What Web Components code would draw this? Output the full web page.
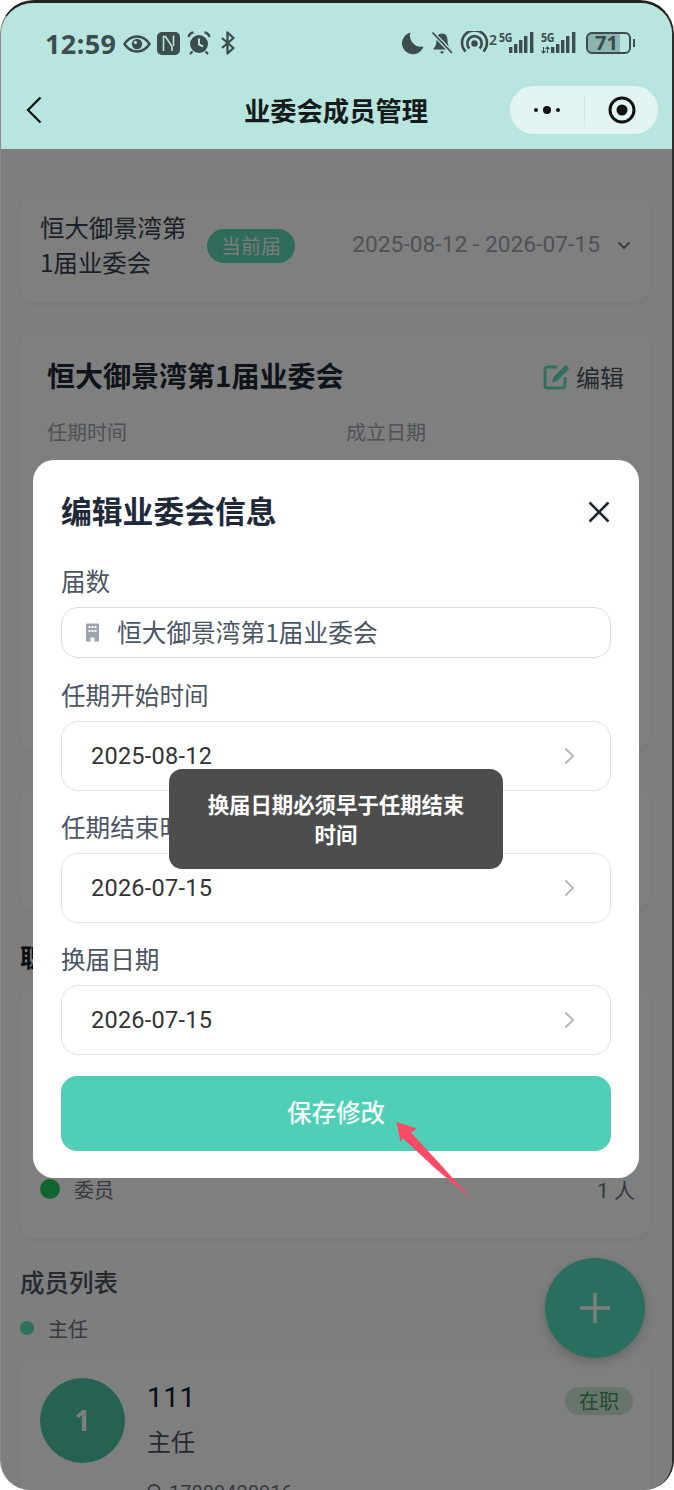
<!DOCTYPE html>
<html lang="zh-CN">
<head>
<meta charset="utf-8">
<title>业委会成员管理</title>
<style>
html,body{margin:0;padding:0;background:#fff}
body{font-family:"Noto Sans CJK SC","Noto Sans",sans-serif}
</style>
</head>
<body>
<phone-screen>
  <status-bar slot="top"></status-bar>
  <nav-bar slot="top" title="业委会成员管理"></nav-bar>
  <committee-page></committee-page>
  <edit-modal slot="over"></edit-modal>
  <toast-message slot="over">换届日期必须早于任期结束时间</toast-message>
  <pointer-arrow slot="over"></pointer-arrow>
</phone-screen>
<script>
const FONT='"Noto Sans CJK SC","Noto Sans",sans-serif';
function def(name,html,init){
  customElements.define(name,class extends HTMLElement{
    constructor(){super();this.attachShadow({mode:'open'});}
    connectedCallback(){
      this.shadowRoot.innerHTML=typeof html==='function'?html(this):html;
      if(init)init(this);
    }
  });
}
def('phone-screen',`<style>
:host{display:block;width:674px;height:1490px;background:#fff;font-family:${FONT}}
.frame{box-sizing:border-box;position:relative;width:674px;height:1490px;overflow:hidden;border-radius:34px 34px 30px 30px;border-top:3px solid #222;border-right:2px solid #2c2c2c;border-left:1px solid #8a8a8a;background:#fafcfb}
.top{position:relative;z-index:3;height:146px;background:#b8e6df}
.dim{position:absolute;inset:0;z-index:2;background:rgba(0,0,0,.5)}
.over{position:absolute;inset:-3px -2px 0 -1px;z-index:4;pointer-events:none}
</style>
<div class="frame">
<div class="top"><slot name="top"></slot></div>
<slot></slot>
<div class="dim"></div>
<div class="over"><slot name="over"></slot></div>
</div>`);

def('status-bar',`<style>
:host{display:flex;align-items:center;height:80px;box-sizing:border-box;padding:0 0 0 44px;margin-bottom:3px;color:#3d4c4c;position:relative}
.time{font:700 27px/1 "Noto Sans",sans-serif;letter-spacing:.4px;width:78px}
svg{display:block;flex:none}
.gap{flex:1}
.t{font-family:"Noto Sans",sans-serif}
</style>
<span class="time">12:59</span>
<svg width="28" height="20" viewBox="0 0 28 20" style="margin-top:1px"><path d="M1.5 10C5 4.5 9 2.500 14 2.500S23 4.500 26.500 10C23 15.500 19 17.500 14 17.500S5 15.500 1.500 10Z" fill="none" stroke="#3d4c4c" stroke-width="2.400"/><circle cx="14" cy="10" r="5.200" fill="#3d4c4c"/><circle cx="12.400" cy="8.400" r="1.600" fill="#b8e6df"/></svg>
<svg width="23" height="23" viewBox="0 0 23 23" style="margin-left:6px"><rect x="0" y="0" width="23" height="23" rx="5" fill="#3d4c4c"/><path d="M6.500 19V4.500H8.500L15 14.500V19" fill="none" stroke="#b8e6df" stroke-width="1.600"/><path d="M16.500 3.500V14" fill="none" stroke="#b8e6df" stroke-width="1.600"/></svg>
<svg width="24" height="24" viewBox="0 0 24 24" style="margin-left:7px"><circle cx="12" cy="13" r="9" fill="#3d4c4c"/><path d="M12 7.500V13.500L16 15.500" fill="none" stroke="#b8e6df" stroke-width="2"/><path d="M1.500 6Q2.500 2 6.500 1.500M22.500 6Q21.500 2 17.500 1.500" fill="none" stroke="#3d4c4c" stroke-width="2.400"/><path d="M5.500 20.500L3 23M18.500 20.500L21 23" stroke="#3d4c4c" stroke-width="2.200"/></svg>
<svg width="16" height="24" viewBox="0 0 16 24" style="margin-left:9px"><path d="M2 7L13.500 17L7.500 22.500V1.500L13.500 7L2 17" fill="none" stroke="#3d4c4c" stroke-width="2.300" stroke-linejoin="round"/></svg>
<span class="gap"></span>
<svg width="23" height="24" viewBox="0 0 23 24"><path d="M9.500 1.500A11 11 0 1 0 22.500 15.500A11 11 0 0 1 9.500 1.500Z" fill="#3d4c4c"/></svg>
<svg width="22" height="24" viewBox="0 0 22 24" style="margin-left:7px"><path d="M11 2.500C15.500 2.500 16.500 6 16.500 9.500C16.500 13 17.500 15.500 19.500 17.500V18.500H2.500V17.500C4.500 15.500 5.500 13 5.500 9.500C5.500 6 6.500 2.500 11 2.500Z" fill="#3d4c4c"/><path d="M8.500 20.500H13.500L11 23Z" fill="#3d4c4c"/><path d="M1.500 1.500L21 22" stroke="#b8e6df" stroke-width="4.200"/><path d="M1.500 1.500L21 22" stroke="#3d4c4c" stroke-width="1.800"/></svg>
<svg width="29" height="24" viewBox="0 0 29 24" style="margin-left:7px"><path d="M5.500 20.500A12.500 12.500 0 1 1 23.500 20.500" fill="none" stroke="#3d4c4c" stroke-width="2.600"/><path d="M9.500 17.500A7.200 7.200 0 1 1 19.500 17.500" fill="none" stroke="#3d4c4c" stroke-width="2.600"/><circle cx="14.500" cy="12.500" r="3.200" fill="#3d4c4c"/></svg>
<span class="t" style="font-size:14px;font-weight:600;width:9px;align-self:flex-start;margin-top:27px">2</span>
<signal-5g style="margin-left:1px"></signal-5g>
<signal-5g arrows style="margin-left:6px"></signal-5g>
<span style="display:flex;align-items:center;margin:0 37px 0 9px">
<span class="t" style="box-sizing:border-box;width:45px;height:22px;border:2px solid #3d4c4c;border-radius:6px;background:linear-gradient(90deg,#8db4b0 77%,transparent 77%);font-size:20px;font-weight:700;line-height:17px;text-align:center;padding-right:4px">71</span>
<span style="width:2px;height:8px;background:#3d4c4c;margin-left:2px"></span>
</span>`);

def('signal-5g',h=>`<style>
:host{display:block;position:relative;width:36px;height:24px;color:#3d4c4c}
span{position:absolute;left:0;top:1px;font:700 12.5px/12px "Noto Sans",sans-serif;letter-spacing:-.5px;transform:scaleX(.85);transform-origin:left}
svg{position:absolute;left:0;top:0}
</style><span>5G</span>
<svg width="36" height="24" viewBox="0 0 36 24" fill="#3d4c4c">
${h.hasAttribute('arrows')?'<path d="M2.500 16V22M.5 20L2.500 22L4.500 20M6.500 22V16M4.500 18L6.500 16L8.500 18" stroke="#3d4c4c" stroke-width="1.100" fill="none"/>':''}
<rect x="10" y="16" width="3.400" height="6"/>
<rect x="15" y="13" width="3.400" height="9"/>
<rect x="20" y="9" width="3.400" height="13"/>
<rect x="25" y="5" width="3.400" height="17"/>
<rect x="31" y="1" width="3.400" height="21"/>
</svg>`);

def('nav-bar',h=>`<style>
:host{display:grid;grid-template-columns:1fr auto 1fr;align-items:center;box-sizing:border-box;height:60px;padding:0 14px 12px 13px;color:#111}
svg{display:block}
.back{margin-left:12px}
h1{margin:0;font-size:26.3px;font-weight:700;line-height:48px;color:#151b1b}
.cap{justify-self:end;display:flex;align-items:center;width:148px;height:48px;border-radius:24px;background:#e3f5f2}
.cap>div{display:flex;align-items:center;justify-content:center}
.m{width:74px;height:100%;gap:5px}
.m i{display:block;width:4px;height:4px;border-radius:50%;background:#111}
.m i.b{width:8px;height:8px}
.d{width:1px;height:32px;background:#d4e9e6}
.r{flex:1}
</style>
<svg class="back" width="16" height="28" viewBox="0 0 16 28"><path d="M14.500 1.500L2 14L14.500 26.500" fill="none" stroke="#111" stroke-width="2.300"/></svg>
<h1>${h.getAttribute('title')}</h1>
<div class="cap"><div class="m"><i></i><i class="b"></i><i></i></div><div class="d"></div>
<div class="r"><svg width="28" height="28" viewBox="0 0 28 28"><circle cx="14" cy="14" r="12" fill="none" stroke="#111" stroke-width="3"/><circle cx="14" cy="14" r="5.500" fill="#111"/></svg></div></div>`);

def('page-card',`<style>
:host{display:block;box-sizing:border-box;background:#fff;border-radius:16px;box-shadow:0 2px 4px rgba(0,0,0,.05);border:1px solid #fafafa}
</style><slot></slot>`);

def('committee-page',`<style>
:host{display:block;padding:44px 22px 0 18px;color:#374151}
page-card{width:632px}
.c1{height:109px;display:flex;align-items:center;padding:0 19px 4px 20px;margin-bottom:26px}
.name{font-size:24.4px;line-height:35px;width:150px;margin-right:17px;padding-bottom:4px;color:#374151}
.tag{width:88px;height:34px;border-radius:17px;background:#5cd6b4;color:#f6f6f6;font-size:20px;line-height:34px;text-align:center}
.date{margin-left:auto;font:400 22.8px/1 Roboto,sans-serif;color:#9ca3af;white-space:nowrap}
.c1 svg{margin-left:17px;flex:none}
.c2{height:422px;padding:27px 26px 0 27px}
.row{display:flex;justify-content:space-between;align-items:center;height:40px}
.ttl{font-size:28px;font-weight:700;color:#1f2937;margin-top:-2px}
.edit{display:flex;align-items:center;gap:6px;font-size:24px;color:#4b5563}
.lbls{display:grid;grid-template-columns:299px 1fr;margin-top:21px;font-size:20px;line-height:30px;color:#9ca3af}
.c3{height:125px;margin-top:35px}
h2{margin:0 0 0 1px;font-size:24.5px;line-height:36px;font-weight:500;color:#4b5563}
.s1{margin-top:29px;margin-bottom:10px;color:#111827;font-weight:700}
.c4{height:253px;padding-top:187px}
.st{display:flex;align-items:center;padding:0 15px 0 20px;height:32px;font-size:20px;color:#6b7280}
.dot{width:20px;height:20px;border-radius:50%;background:#22cc5e;margin-right:14px}
.n{margin-left:auto;font:400 21px Roboto,sans-serif}
.s2{margin-top:26px}
.le{display:flex;align-items:center;height:30px;margin:13px 0 0 1px;font-size:20px;color:#6b7280}
.le i{width:14px;height:14px;border-radius:50%;background:#56e0c0;margin:0 14px 0 0}
.c5{margin-top:14px;height:200px;padding:20px 17px 0 20px;display:flex;align-items:flex-start;position:relative}
.av{flex:none;width:85px;height:85px;border-radius:50%;background:#4cc4a6;color:#fff;font:700 28px/85px "Noto Sans",sans-serif;text-align:center}
.in{margin-left:22px;flex:1;padding-top:2px}
.nm{font:400 28px/36px Roboto,sans-serif;color:#111827;letter-spacing:.500px}
.ro{font-size:24px;line-height:36px;margin-top:7px;color:#4b5563}
.ph{display:flex;align-items:center;gap:8px;margin-top:20px;font:400 20px/28px Roboto,sans-serif;color:#6b7280}
.st2{width:68px;height:28px;border-radius:14px;background:#d0ead8;color:#3f9a5e;font-size:20px;line-height:28px;text-align:center;margin-top:9px}
.fab{position:absolute;left:544px;top:1255px;width:100px;height:100px;border-radius:50%;background:#52dcbc;box-shadow:0 4px 12px rgba(0,0,0,.2);display:flex;align-items:center;justify-content:center}
</style>
<page-card class="c1"><div class="name">恒大御景湾第1届业委会</div><div class="tag">当前届</div>
<span class="date">2025-08-12 - 2026-07-15</span>
<svg width="14" height="9" viewBox="0 0 14 9"><path d="M1.500 1.500L7 7L12.500 1.500" fill="none" stroke="#6b7280" stroke-width="1.800"/></svg></page-card>
<page-card class="c2">
<div class="row"><span class="ttl">恒大御景湾第1届业委会</span>
<span class="edit"><svg width="27" height="27" viewBox="0 0 27 27"><path d="M14 4H5Q2 4 2 7V22Q2 25 5 25H19Q22 25 22 22V14" fill="none" stroke="#62e0c0" stroke-width="3"/><path d="M10 14.500L21 3.500Q23 1.500 25 3.500Q26.500 5.500 24.500 7.500L13.500 18.500L9 19.500Z" fill="#62e0c0"/></svg>编辑</span></div>
<div class="lbls"><span>任期时间</span><span>成立日期</span></div>
</page-card>
<page-card class="c3"></page-card>
<h2 class="s1">职</h2>
<page-card class="c4"><div class="st"><span class="dot"></span>委员<span class="n">1 人</span></div></page-card>
<h2 class="s2">成员列表</h2>
<div class="le"><i></i>主任</div>
<page-card class="c5"><div class="av">1</div>
<div class="in"><div class="nm">111</div><div class="ro">主任</div>
<div class="ph"><svg width="14" height="18" viewBox="0 0 14 18"><path d="M7 1C3.500 1 1.500 3.500 1.500 6.500C1.500 10 7 16 7 16S12.500 10 12.500 6.500C12.500 3.500 10.500 1 7 1Z" fill="none" stroke="#6b7280" stroke-width="1.800"/></svg>17889428916</div></div>
<div class="st2">在职</div></page-card>
<div class="fab"><svg width="32" height="32" viewBox="0 0 32 32"><path d="M16 1V31M1 16H31" stroke="#fff" stroke-width="3.500"/></svg></div>`);

def('form-field',h=>`<style>
:host{display:block;margin-top:20px}
label{display:block;font-size:24.6px;line-height:30px;padding-bottom:4px;color:#4b5563;margin-bottom:8px}
.box{box-sizing:border-box;height:70px;border:1.500px solid #dfe1e5;border-radius:17px;background:#fff;display:flex;align-items:center;padding:0 35px 1px 29px;font:400 23.500px Roboto,sans-serif;color:#333;letter-spacing:.250px}
svg{margin-left:auto;display:block}
</style><label>${h.getAttribute('label')}</label>
<div class="box">${h.getAttribute('value')}<svg width="11" height="18" viewBox="0 0 11 18"><path d="M1.500 1.500L9 9L1.500 16.500" fill="none" stroke="#b4b8bf" stroke-width="2"/></svg></div>`);

def('edit-modal',`<style>
:host{position:absolute;left:33px;top:460px;width:606px;height:718px;box-sizing:border-box;background:#fff;border-radius:21px;padding:31px 28px 28px}
.h{display:flex;justify-content:space-between;align-items:center;height:40px}
h3{margin:-4px 0 0;font-size:30.800px;font-weight:700;color:#1f2937}
.lab{font-size:24.600px;line-height:30px;padding-bottom:4px;color:#4b5563;margin:34px 0 8px}
.inp{box-sizing:border-box;height:51px;border:1.500px solid #d9dce1;border-radius:17px;display:flex;align-items:center;padding:0 0 3px 23px;font-size:24.700px;color:#4b5563;gap:17px}
.inp svg{flex:none}
.btn{box-sizing:border-box;height:75px;margin-top:21px;border-radius:16px;background:#4fcfb6;color:#f4fbf9;font-size:24.500px;font-weight:500;text-align:center;line-height:71px}
.x{margin:2px 1px 0 0;display:block}
</style>
<div class="h"><h3>编辑业委会信息</h3>
<svg class="x" width="22" height="22" viewBox="0 0 22 22"><path d="M1.500 1.500L20.500 20.500M20.500 1.500L1.500 20.500" stroke="#1f2937" stroke-width="2.600"/></svg></div>
<div class="lab">届数</div>
<div class="inp"><svg width="15" height="19" viewBox="0 0 15 19" style="margin-top:3px"><path d="M1 1.500Q1 .5 2 .5H13Q14 .5 14 1.500V18.500H9.500V14.500H5.500V18.500H1Z" fill="#9ca3af"/><g fill="#fff"><rect x="3.500" y="3" width="2" height="2"/><rect x="6.500" y="3" width="2" height="2"/><rect x="9.500" y="3" width="2" height="2"/><rect x="3.500" y="7" width="2" height="2"/><rect x="6.500" y="7" width="2" height="2"/><rect x="9.500" y="7" width="2" height="2"/></g></svg>恒大御景湾第1届业委会</div>
<form-field label="任期开始时间" value="2025-08-12" style="margin-top:21px"></form-field>
<form-field label="任期结束时间" value="2026-07-15"></form-field>
<form-field label="换届日期" value="2026-07-15"></form-field>
<div class="btn">保存修改</div>`);

def('toast-message',`<style>
:host{position:absolute;left:169px;top:769px;width:334px;height:100px;box-sizing:border-box;padding:20px 30px;background:#4d4d4d;border-radius:13px;color:#fff;font-size:21.400px;line-height:30px;font-weight:700;text-align:center;z-index:2}
</style><slot></slot>`);

def('pointer-arrow',`<style>
:host{position:absolute;left:390px;top:1116px;width:90px;height:90px;z-index:3}
svg{display:block}
</style><svg width="90" height="90" viewBox="390 1116 90 90"><path d="M396.500 1122L417 1128.500L411 1132.500L440 1164L471 1198.500L436 1169L402.500 1138L400.500 1142Z" fill="#fb4a66"/></svg>`);
</script>
</body>
</html>
